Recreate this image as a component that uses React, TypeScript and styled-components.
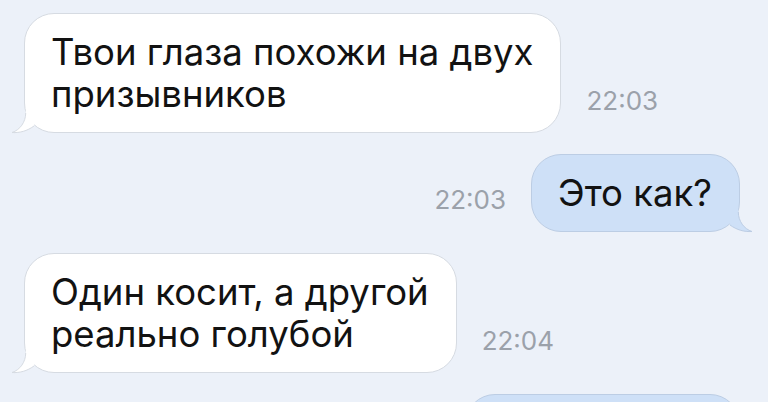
import React from 'react';
import styled, { createGlobalStyle } from 'styled-components';

const GlobalStyle = createGlobalStyle`
    body {
        margin: 0;
        background: #ecf1f9;
        overflow: hidden;
        font-family: Inter, "Noto Sans", sans-serif;
    }
`

const Chat = styled.div`
    display: flex;
    flex-direction: column;
    gap: 21px;
    padding: 13px 28px 0 24px;
`

const Row = styled.div<{ $out?: boolean }>`
    display: flex;
    align-items: flex-end;
    justify-content: ${p => (p.$out ? 'flex-end' : 'flex-start')};
    gap: 25px;
`

const Bubble = styled.div<{ $out?: boolean; $width?: number }>`
    position: relative;
    box-sizing: border-box;
    width: ${p => (p.$width ? p.$width + 'px' : 'auto')};
    min-height: ${p => (p.$width ? '75px' : '0')};
    padding: 17px 27px 17px 26px;
    border-radius: 30px;
    background: ${p => (p.$out ? '#cee0f7' : '#ffffff')};
    border: 1px solid ${p => (p.$out ? '#bccde4' : '#d6dbe2')};
    color: #121212;
    font-size: 36.5px;
    line-height: 42px;
    white-space: pre-line;
`

const Tail = styled.svg<{ $out?: boolean }>`
    position: absolute;
    bottom: -1px;
    ${p => (p.$out ? 'right: -13px; transform: scaleX(-1);' : 'left: -13px;')}
    width: 24px;
    height: 24px;
    overflow: visible;
`

const Time = styled.span`
    font-size: 26px;
    color: #9ba1aa;
    margin-bottom: 17px;
    white-space: nowrap;
`

function BubbleTail({ out }: { out?: boolean }) {
    const fill = out ? '#cee0f7' : '#ffffff'
    const stroke = out ? '#bccde4' : '#d6dbe2'
    return (
        <Tail $out={out} viewBox="0 0 24 24">
            <path d="M13.7 4 C13.7 13 8 21 0 23.5 C8 24 15 22 22 17 L26 0 L14 0 Z" fill={fill} />
            <path d="M13.7 4 C13.7 13 8 21 0 23.5 C8 24 15 22 22 17" fill="none" stroke={stroke} strokeWidth="1" />
        </Tail>
    )
}

function App() {
    return (
        <React.Fragment>
            <GlobalStyle />
            <Chat>
                <Row>
                    <Bubble>
                        {'Твои глаза похожи на двух\nпризывников'}
                        <BubbleTail />
                    </Bubble>
                    <Time>22:03</Time>
                </Row>
                <Row $out>
                    <Time>22:03</Time>
                    <Bubble $out>
                        Это как?
                        <BubbleTail out />
                    </Bubble>
                </Row>
                <Row>
                    <Bubble>
                        {'Один косит, а другой\nреально голубой'}
                        <BubbleTail />
                    </Bubble>
                    <Time>22:04</Time>
                </Row>
                <Row $out>
                    <Bubble $out $width={275} />
                </Row>
            </Chat>
        </React.Fragment>
    );
}

export default App;
